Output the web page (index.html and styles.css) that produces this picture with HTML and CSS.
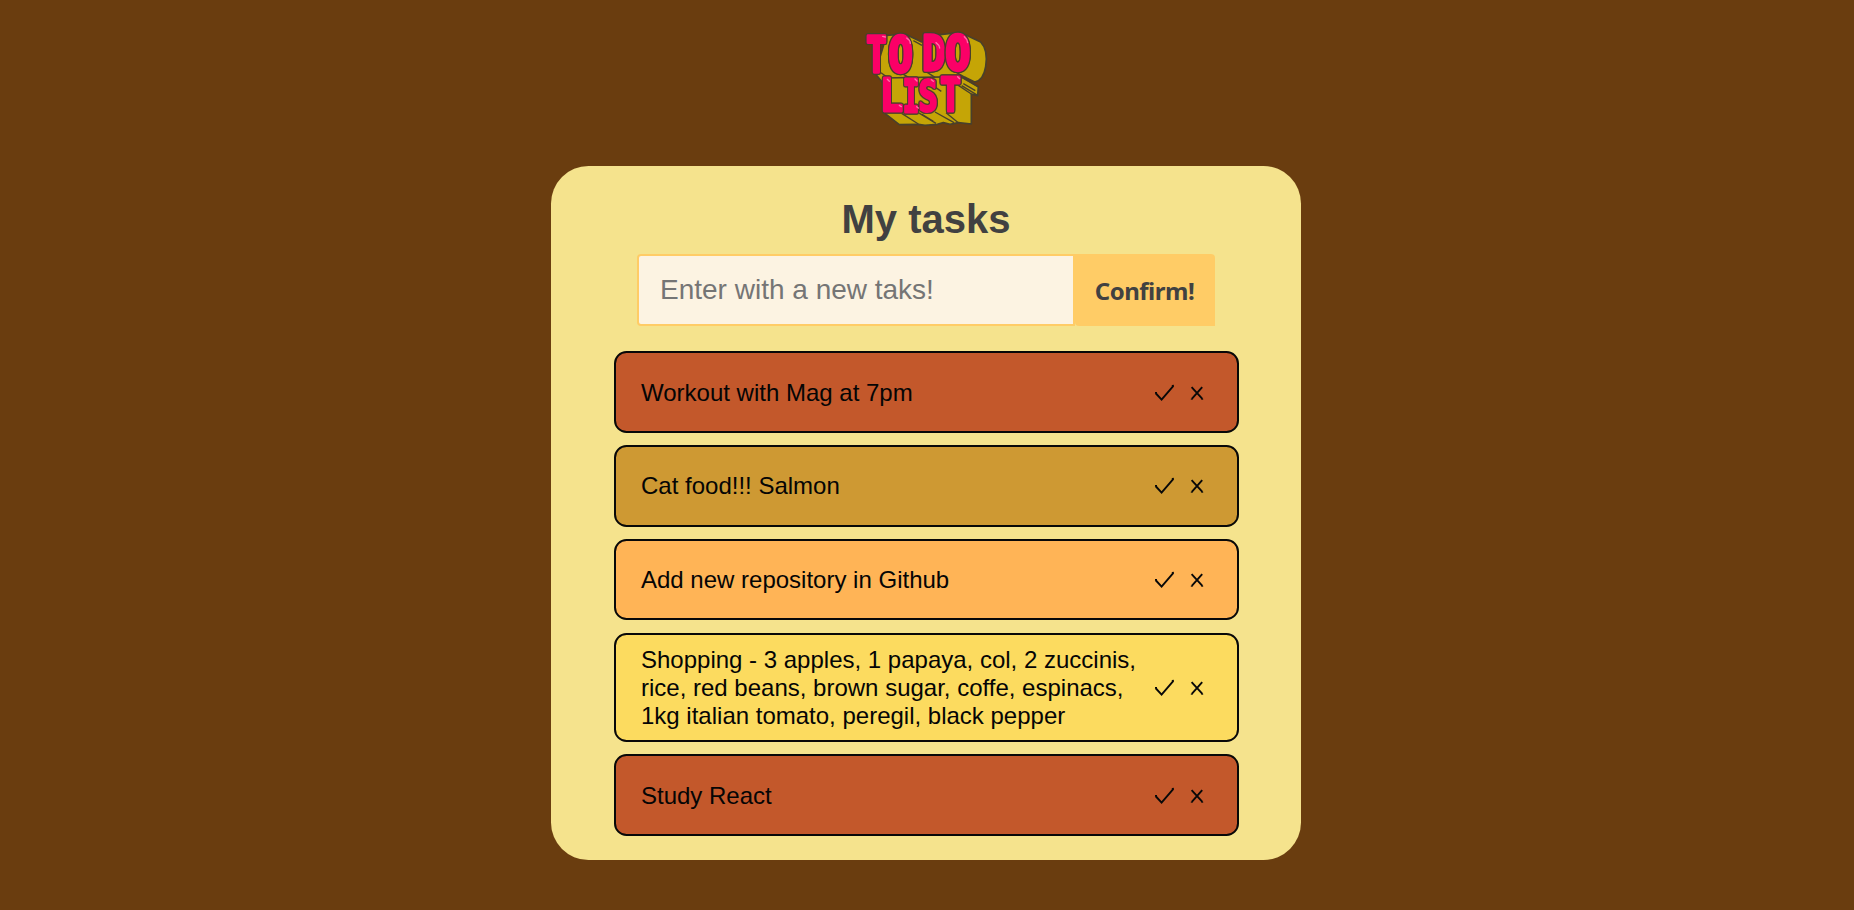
FILE: index.html
```html
<!DOCTYPE html>
<html lang="en">
<head>
<meta charset="utf-8">
<title>To do list</title>
<link rel="stylesheet" href="styles.css">
</head>
<body>
<svg class="symbols" width="0" height="0" aria-hidden="true">
  <symbol id="check" viewBox="0 0 22 18"><path d="M1.5 9 L7.6 15.6 L19.4 1.8"/><path d="M1 8.5 L3 8.5 M17.8 1.5 L20 1.3" class="thin"/></symbol>
  <symbol id="cross" viewBox="0 0 14 16"><path d="M1.6 2.2 L12.4 13.8 M12.2 2.2 L1.8 13.8"/><path d="M.8 14.2 H2.6 M11.4 14.2 H13.2" class="thin"/></symbol>
</svg>
<header class="header">
  <svg class="logo" viewBox="0 0 450 345" role="img" aria-label="To do list">
    <g class="depth">
      <path d="M75 160 L98 188 L130 176 L335 176 L345 172 L374 186 Q400 182 407 140 Q415 90 392 66 L330 37 L270 44 L240 60 L215 66 L165 42 L110 46 Z"/>
      <path d="M98 275 L148 314 L205 313 L225 316 L262 313 L280 308 L300 313 L325 308 L364 312 L364 222 L383 227 L385 200 L335 170 L100 174 Z"/>
      <path d="M335 172 L385 201 M335 197 L383 226 M340 191 L376 212 M325 196 L364 222 M155 280 L205 312 M205 278 L258 310 M216 283 L250 304 M255 276 L312 308 M288 278 L325 308 M252 199 L274 214 M228 155 L255 172 M310 152 L345 172 M190 62 L216 76 M93 158 L118 176 M160 163 L180 174"/>
    </g>
    <g class="letters">
      <text transform="translate(49 157) scale(.69 1)">T</text>
      <text transform="translate(115.5 157) scale(.82 1.01)">O</text>
      <text transform="translate(217 149) scale(.78 .99)">D</text>
      <text transform="translate(285.5 149) scale(.85 .98)">O</text>
      <text transform="translate(90 274) scale(.78 .9)">L</text>
      <text transform="translate(158.5 275) scale(.56 .91)">I</text>
      <text transform="translate(205.5 272) scale(.65 .88)">S</text>
      <text transform="translate(271 272) scale(.7 .96)">T</text>
    </g>
    <path class="shine" d="M98 49 L106 51 M170 54 Q180 60 181 70 M258 68 Q268 75 269 84 M343 50 Q352 57 353 68 M112 178 L118 184 M195 177 L201 183 M244 179 L250 184 M323 170 L329 176 M148 256 L154 260 M200 260 L205 264"/>
  </svg>
</header>
<main class="card">
  <h1 class="title">My tasks</h1>
  <form class="entry">
    <input class="entry-input" type="text" placeholder="Enter with a new taks!" aria-label="New task">
    <button class="entry-button" type="button">Confirm!</button>
  </form>
  <ul class="tasks">
    <li class="task rust"><span class="label">Workout with Mag at 7pm</span><svg class="check"><use href="#check"/></svg><svg class="cross"><use href="#cross"/></svg></li>
    <li class="task gold"><span class="label">Cat food!!! Salmon</span><svg class="check"><use href="#check"/></svg><svg class="cross"><use href="#cross"/></svg></li>
    <li class="task orange"><span class="label">Add new repository in Github</span><svg class="check"><use href="#check"/></svg><svg class="cross"><use href="#cross"/></svg></li>
    <li class="task yellow"><span class="label">Shopping - 3 apples, 1 papaya, col, 2 zuccinis, rice, red beans, brown sugar, coffe, espinacs, 1kg italian tomato, peregil, black pepper</span><svg class="check"><use href="#check"/></svg><svg class="cross"><use href="#cross"/></svg></li>
    <li class="task rust"><span class="label">Study React</span><svg class="check"><use href="#check"/></svg><svg class="cross"><use href="#cross"/></svg></li>
  </ul>
</main>
</body>
</html>
```
FILE: styles.css
```css
* { box-sizing: border-box; }
body {
  margin: 0;
  min-height: 910px;
  background: #6a3d0f;
  font-family: "Liberation Sans", Arial, sans-serif;
  overflow: hidden;
}
.symbols { display: none; }
.header { height: 166px; padding: 20px 0 0 850px; }
.logo { display: block; width: 150px; height: 115px; }
.depth { fill: #c5a506; stroke: #49402b; stroke-width: 5; stroke-linejoin: round; }
.depth path:last-child { fill: none; stroke-width: 4; }
.letters text {
  font: bold 147px "DejaVu Sans Mono", monospace;
  fill: #fb0067;
  stroke: #fb0067;
  stroke-width: 10px;
  stroke-linejoin: round;
}
.letters text {
  filter: drop-shadow(3px 0 0 #49402b) drop-shadow(-3px 0 0 #49402b) drop-shadow(0 3px 0 #49402b) drop-shadow(0 -3px 0 #49402b);
}
.shine { fill: none; stroke: #ff72aa; stroke-width: 4; stroke-linecap: round; }
.card {
  width: 750px;
  height: 694px;
  margin-left: 551px;
  padding: 30px 62px 0 63px;
  border-radius: 37.5px;
  background: #f5e38d;
}
.title {
  margin: 0;
  height: 58px;
  padding-right: 1px;
  font-size: 40px;
  line-height: 46px;
  text-align: center;
  color: #414141;
}
.entry { display: flex; height: 72px; margin: 0 24px 25.2px 23px; }
.entry-input {
  width: 438px;
  padding: 0 20px 0 21px;
  border: 2px solid #ffcc66;
  border-radius: 4px 0 0 4px;
  background: #fcf3e2;
  font: 28px "Liberation Sans", Arial, sans-serif;
}
.entry-input::placeholder { color: #757575; }
.entry-button {
  width: 140px;
  padding: 1px 1px 0 0;
  border: 0;
  border-radius: 0 4px 0 4px;
  background: #ffcc66;
  color: #414141;
  font: bold 24px "Noto Sans", sans-serif;
  letter-spacing: -.5px;
}
.tasks { display: grid; gap: 12.4px; margin: 0; padding: 0; list-style: none; }
.task {
  display: flex;
  align-items: center;
  min-height: 81.5px;
  padding: 11.2px 33px 10px 25px;
  border: 2px solid #080808;
  border-radius: 12.5px;
  color: #050505;
  font-size: 24px;
  line-height: 28px;
}
.rust { background: #c3582b; }
.gold { background: #ce9933; }
.orange { background: #ffb456; }
.yellow { background: #fcdb5f; }
.label { flex: 1; padding-right: 12px; }
.check, .cross { flex: none; fill: none; stroke: #080808; stroke-width: 1.9; }
.check { width: 22px; height: 18px; }
.cross { width: 14px; height: 16px; margin-left: 14px; }
.thin { stroke-width: 1; }
```
